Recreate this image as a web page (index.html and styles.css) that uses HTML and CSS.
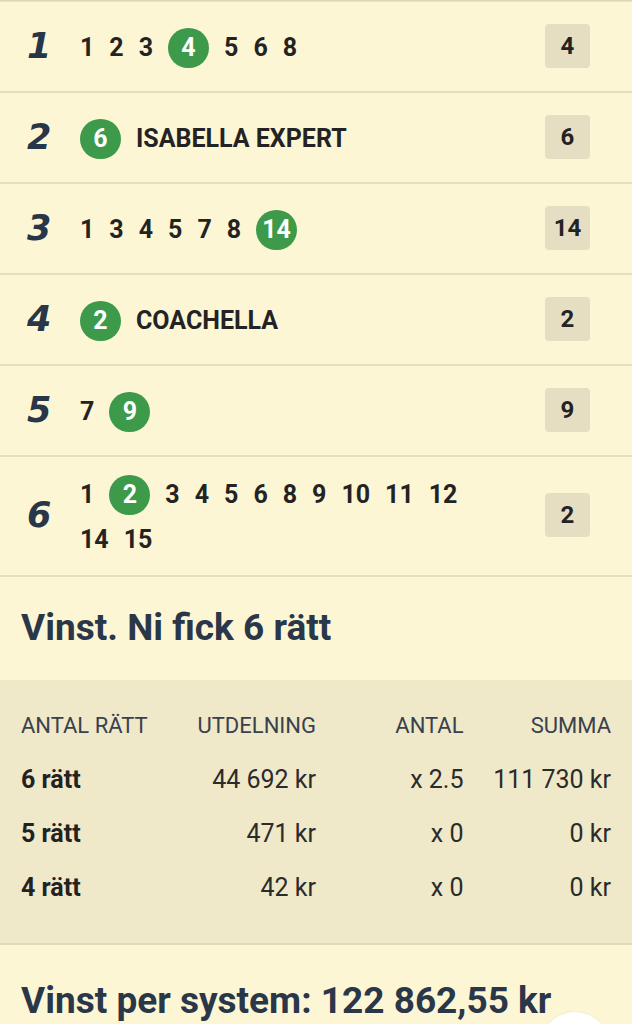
FILE: index.html
```html
<!DOCTYPE html>
<html lang="sv">
<head>
  <meta charset="UTF-8">
  <title>Rätt rad</title>
  <link rel="stylesheet" href="styles.css">
</head>
<body>

<div class="top-shade"></div>

<div class="legs">
  <div class="leg">
    <div class="leg-no">1</div>
    <div class="picks">
      <span class="pick">1</span>
      <span class="pick">2</span>
      <span class="pick">3</span>
      <span class="pick win">4</span>
      <span class="pick">5</span>
      <span class="pick">6</span>
      <span class="pick">8</span>
    </div>
    <div class="badge">4</div>
  </div>

  <div class="leg">
    <div class="leg-no">2</div>
    <div class="picks">
      <span class="pick win">6</span>
      <span class="pick">ISABELLA EXPERT</span>
    </div>
    <div class="badge">6</div>
  </div>

  <div class="leg">
    <div class="leg-no">3</div>
    <div class="picks">
      <span class="pick">1</span>
      <span class="pick">3</span>
      <span class="pick">4</span>
      <span class="pick">5</span>
      <span class="pick">7</span>
      <span class="pick">8</span>
      <span class="pick win">14</span>
    </div>
    <div class="badge">14</div>
  </div>

  <div class="leg">
    <div class="leg-no">4</div>
    <div class="picks">
      <span class="pick win">2</span>
      <span class="pick">COACHELLA</span>
    </div>
    <div class="badge">2</div>
  </div>

  <div class="leg">
    <div class="leg-no">5</div>
    <div class="picks">
      <span class="pick">7</span>
      <span class="pick win">9</span>
    </div>
    <div class="badge">9</div>
  </div>

  <div class="leg">
    <div class="leg-no">6</div>
    <div class="picks">
      <span class="pick">1</span>
      <span class="pick win">2</span>
      <span class="pick">3</span>
      <span class="pick">4</span>
      <span class="pick">5</span>
      <span class="pick">6</span>
      <span class="pick">8</span>
      <span class="pick">9</span>
      <span class="pick">10</span>
      <span class="pick">11</span>
      <span class="pick">12</span>
      <span class="pick">14</span>
      <span class="pick">15</span>
    </div>
    <div class="badge">2</div>
  </div>
</div>

<div class="result-title">Vinst. Ni fick 6 rätt</div>

<div class="payout">
  <div class="payout-grid">
    <div class="th">ANTAL RÄTT</div>
    <div class="th num">UTDELNING</div>
    <div class="th num">ANTAL</div>
    <div class="th num">SUMMA</div>

    <div class="td label">6 rätt</div>
    <div class="td num">44 692 kr</div>
    <div class="td num">x 2.5</div>
    <div class="td num">111 730 kr</div>

    <div class="td label">5 rätt</div>
    <div class="td num">471 kr</div>
    <div class="td num">x 0</div>
    <div class="td num">0 kr</div>

    <div class="td label">4 rätt</div>
    <div class="td num">42 kr</div>
    <div class="td num">x 0</div>
    <div class="td num">0 kr</div>
  </div>
</div>

<div class="total">Vinst per system: 122 862,55 kr</div>

<div class="fab-clip"><div class="fab"></div></div>

</body>
</html>
```

FILE: styles.css
```css
body {
  margin: 0;
  height: 1024px;
  background-color: #fdf6d4; /* Pale cream */
  font-family: Roboto, "Liberation Sans", sans-serif;
  color: #222222;
  overflow: hidden;
}
.top-shade {
  height: 2px;
  background: linear-gradient(#d8cfb0, #f1e9c7);
}
.leg {
  display: flex;
  align-items: center;
  box-sizing: border-box;
  min-height: 91px;
  padding: 13px 42px 15px 21px;
  border-bottom: 2px solid #e7dfbc;
}
.leg-no {
  flex: none;
  width: 59px;
  padding-left: 6px;
  box-sizing: border-box;
  font-family: "DejaVu Sans", sans-serif;
  font-weight: bold;
  font-style: oblique;
  font-size: 35px;
  color: #283649; /* Navy */
}
.picks {
  flex: 1;
  display: flex;
  flex-wrap: wrap;
  align-items: center;
  column-gap: 15px;
  row-gap: 5px;
  padding-top: 5px;
  margin-right: 58px;
}
.pick {
  height: 40px;
  line-height: 40px;
  font-size: 25px;
  font-weight: bold;
  color: #232323;
}
.pick.win {
  min-width: 41px;
  padding: 0 1px;
  box-sizing: border-box;
  border-radius: 20px;
  text-align: center;
  background-color: #3e9a4b; /* Green */
  color: #ffffff;
}
.badge {
  flex: none;
  width: 45px;
  height: 44px;
  border-radius: 4px;
  background-color: #e6dec3;
  display: flex;
  justify-content: center;
  align-items: center;
  font-size: 24px;
  font-weight: bold;
  color: #232323;
}
.result-title {
  padding: 30px 21px 31px 21px;
  line-height: 42px;
  font-size: 37px;
  font-weight: bold;
  color: #2a3749;
}
.payout {
  background-color: #efe8c9;
  padding: 18px 21px 29px 21px;
  border-bottom: 2px solid #e2dab7;
}
.payout-grid {
  display: grid;
  grid-template-columns: 1fr 1fr 1fr 1fr;
  grid-auto-rows: 54px;
  align-items: center;
}
.th {
  font-size: 22px;
  color: #39414d;
}
.td {
  font-size: 25px;
  color: #2b2b2b;
}
.td.label {
  font-weight: bold;
  color: #222222;
}
.num {
  text-align: right;
}
.total {
  padding: 35px 21px 0 21px;
  line-height: 42px;
  font-size: 37px;
  font-weight: bold;
  color: #2a3749;
}
.fab-clip {
  position: absolute;
  left: 539px;
  top: 1011px;
  width: 72px;
  height: 13px;
  overflow: hidden;
}
.fab {
  width: 70px;
  height: 70px;
  margin: 1px;
  border-radius: 50%;
  background-color: #ffffff;
  box-shadow: 0 0 3px rgba(0, 0, 0, 0.08);
}
```
